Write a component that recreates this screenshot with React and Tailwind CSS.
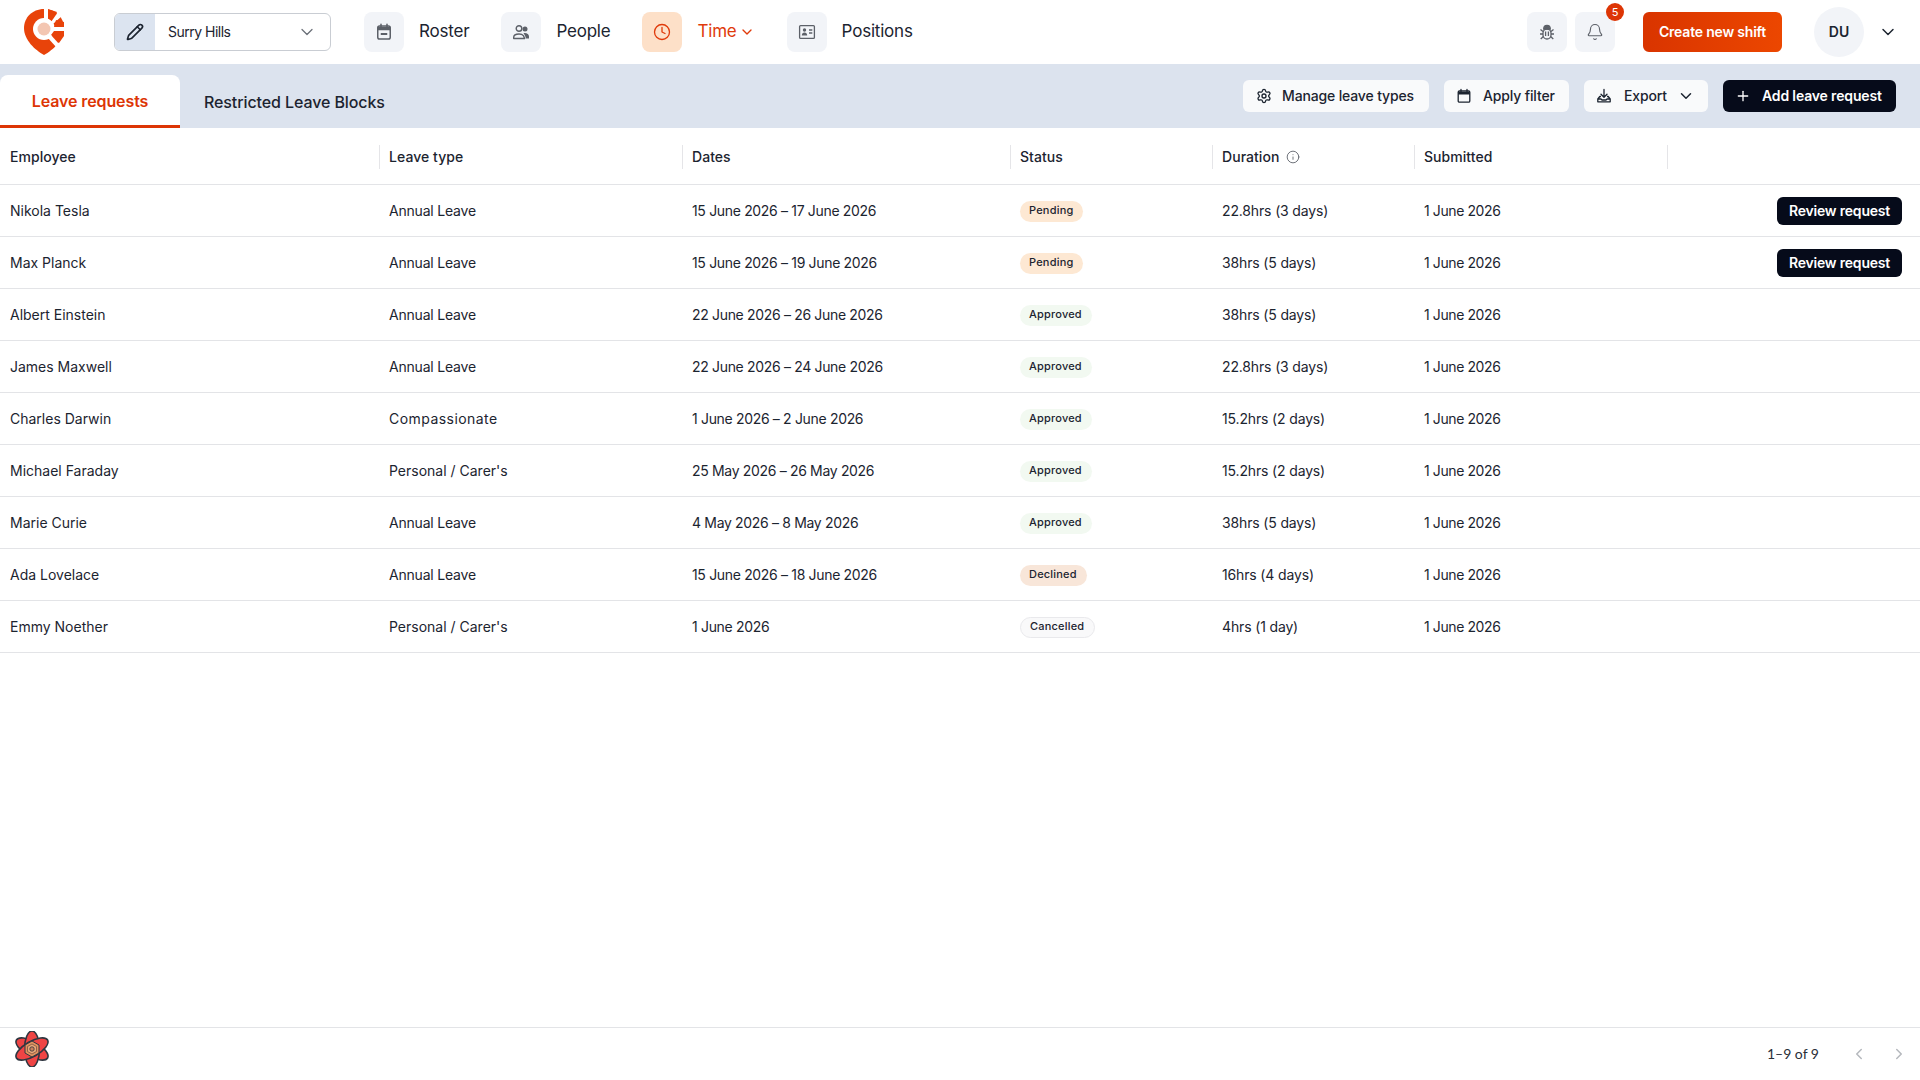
import React from "react";
import {
  Bell,
  ChevronDown,
  ChevronLeft,
  ChevronRight,
  Clock,
  Info,
  Pencil,
  Plus,
  Settings,
} from "lucide-react";

const rows = [
  ["Nikola Tesla", "Annual Leave", "15 June 2026 – 17 June 2026", "Pending", "22.8hrs (3 days)", true],
  ["Max Planck", "Annual Leave", "15 June 2026 – 19 June 2026", "Pending", "38hrs (5 days)", true],
  ["Albert Einstein", "Annual Leave", "22 June 2026 – 26 June 2026", "Approved", "38hrs (5 days)", false],
  ["James Maxwell", "Annual Leave", "22 June 2026 – 24 June 2026", "Approved", "22.8hrs (3 days)", false],
  ["Charles Darwin", "Compassionate", "1 June 2026 – 2 June 2026", "Approved", "15.2hrs (2 days)", false],
  ["Michael Faraday", "Personal / Carer's", "25 May 2026 – 26 May 2026", "Approved", "15.2hrs (2 days)", false],
  ["Marie Curie", "Annual Leave", "4 May 2026 – 8 May 2026", "Approved", "38hrs (5 days)", false],
  ["Ada Lovelace", "Annual Leave", "15 June 2026 – 18 June 2026", "Declined", "16hrs (4 days)", false],
  ["Emmy Noether", "Personal / Carer's", "1 June 2026", "Cancelled", "4hrs (1 day)", false],
];

const badgeStyles = {
  Pending: "bg-[#fde8d3]",
  Approved: "bg-[#f2f9f1]",
  Declined: "bg-[#f8e6d9]",
  Cancelled: "bg-[#f9f9fa] border border-[#e9e9ec]",
};

const leaveTracking = {
  "Annual Leave": "tracking-[-0.2px]",
  Compassionate: "tracking-[0.45px]",
  "Personal / Carer's": "",
};

const gridCols = "grid grid-cols-[379px_303px_328px_202px_202px_253px_1fr]";

function Logo() {
  return (
    <svg width="42" height="48" viewBox="0 0 42 48">
      <path
        d="M21 1 C9 1 1 10 1 20 C1 32 12 42 21 47 C30 42 41 32 41 20 C41 10 33 1 21 1 Z"
        fill="#e8430a"
      />
      <circle cx="21" cy="21" r="11" fill="#fff" />
      <path d="M21 0 L25 0 L25 11 L21 11 Z" fill="#fff" />
      <path d="M25 1 L34 4 L29 13 L25 10 Z" fill="#e8430a" />
      <path d="M35 4 L39 8 L30 16 L28 14 Z" fill="#fff" />
      <path d="M33 12 L41 14 L41 19 L31 19 Z" fill="#e8430a" />
      <path d="M29 19 H42 V23 H29 Z" fill="#fff" />
      <path d="M31 23 H41 V28 L36 35 L28 27 Z" fill="#e8430a" />
      <path d="M27 26 L37 37 L34 40 L24 29 Z" fill="#fff" />
      <circle cx="21" cy="21" r="6.5" fill="#f3c6b2" />
    </svg>
  );
}

function FlowerLogo() {
  return (
    <svg width="40" height="36" viewBox="1 0 38 36">
      {[30, 90, 150].map((a) => (
        <ellipse
          key={a}
          cx="20"
          cy="18"
          rx="18"
          ry="7.5"
          transform={`rotate(${a} 20 18)`}
          fill="#ef4444"
          stroke="#2f3640"
          strokeWidth="1.6"
        />
      ))}
      <polygon points="20,10 27,14 27,22 20,26 13,22 13,14" fill="#e0935f" stroke="#2f3640" strokeWidth="1" />
      <polygon points="20,13 24.5,15.5 24.5,20.5 20,23 15.5,20.5 15.5,15.5" fill="#e9a878" stroke="#7a5240" strokeWidth="0.8" />
      <circle cx="20" cy="18" r="2.2" fill="#c9805a" stroke="#2f3640" strokeWidth="0.8" />
    </svg>
  );
}

function RosterIcon() {
  return (
    <svg width="20" height="20" viewBox="0 0 20 20" fill="none" stroke="currentColor" strokeWidth="1.5">
      <rect x="3.75" y="4" width="12.5" height="13" rx="1.8" />
      <path d="M3.75 6.5h12.5" strokeWidth="3.5" />
      <path d="M7 2.2v2.5M13 2.2v2.5" strokeLinecap="round" />
      <path d="M6.75 12h6.5" strokeWidth="2" />
    </svg>
  );
}

function PeopleIcon() {
  return (
    <svg width="20" height="20" viewBox="0 0 20 20" fill="none" stroke="currentColor" strokeWidth="1.4">
      <circle cx="8" cy="6.5" r="2.8" />
      <path d="M2.7 16.5v-1.2c0-2 2.3-3.3 5.3-3.3 2.2 0 3.6.6 4.4 1.6l1.2 2.9Z" strokeLinejoin="round" />
      <circle cx="14" cy="7" r="2.5" fill="currentColor" stroke="none" />
      <path d="M12.5 11.2c3-.5 5.5.8 5.5 3.2v2.1h-3.2c-.2-2-1-3.9-2.3-5.3Z" fill="currentColor" stroke="none" />
    </svg>
  );
}

function PositionIcon() {
  return (
    <svg width="20" height="20" viewBox="0 0 20 20" fill="none" stroke="currentColor" strokeWidth="1.3">
      <rect x="2.6" y="3.6" width="14.8" height="12.8" rx="1" />
      <circle cx="7.5" cy="8" r="1.7" fill="currentColor" stroke="none" />
      <path d="M4.8 13.5c0-2 1.2-3 2.7-3s2.7 1 2.7 3Z" fill="currentColor" stroke="none" />
      <path d="M12 8h3.3M12 11h3.3" />
    </svg>
  );
}

function BugIcon() {
  return (
    <svg width="20" height="20" viewBox="0 0 20 20" fill="none" stroke="currentColor" strokeWidth="1.3">
      <path d="M6.7 7c0-2 1.4-3.6 3.3-3.6S13.3 5 13.3 7Z" fill="currentColor" />
      <rect x="6" y="7" width="8" height="10" rx="4" />
      <path d="M8.6 9.5v4.5M11.4 9.5v4.5M6 9.5 3.5 7.5M14 9.5l2.5-2M6 12H3M14 12h3M6.4 14.6 3.7 17M13.6 14.6l2.7 2.4" />
    </svg>
  );
}

function CalendarIcon() {
  return (
    <svg width="16" height="16" viewBox="0 0 16 16" fill="none" stroke="currentColor" strokeWidth="1.3">
      <rect x="2.2" y="3" width="11.6" height="11.2" rx="1.2" />
      <path d="M2.2 5.2h11.6" strokeWidth="2.6" />
      <path d="M5 1.4v2M11 1.4v2" strokeLinecap="round" />
    </svg>
  );
}

function ExportIcon() {
  return (
    <svg width="16" height="16" viewBox="0 0 16 16" fill="none" stroke="currentColor" strokeWidth="1.3">
      <path d="M8 1.5v7.5M5 6.3 8 9.3l3-3" strokeLinecap="round" strokeLinejoin="round" />
      <path d="M5 8.5H3.8L1.8 11v2.8h12.4V11l-2-2.5H11M1.8 11h3.2l1 1h4l1-1h3.2" strokeLinejoin="round" />
    </svg>
  );
}

function NavItem({ icon: Icon, label, active }) {
  return (
    <div className="flex items-center gap-4">
      <div
        className={`w-10 h-10 rounded-lg flex items-center justify-center ${
          active ? "bg-[#fde0c8] text-[#e03a0a]" : "bg-[#f2f4f8] text-[#5c6068]"
        }`}
      >
        <Icon />
      </div>
      <span className={`text-[17px] -ml-px -mt-[1px] tracking-[-0.2px] ${active ? "text-[#e03a0a]" : "text-[#1c2430]"}`}>{label}</span>
      {active && <ChevronDown size={16} className="text-[#e03a0a] -ml-[14px]" />}
    </div>
  );
}

function ToolButton({ children, className }) {
  return (
    <button
      className={`h-8 rounded-md flex items-center text-sm font-medium tracking-[-0.15px] text-[#1c2430] bg-[#f9fafb] ${className}`}
    >
      {children}
    </button>
  );
}

export default function App() {
  return (
    <div className="h-screen flex flex-col bg-white font-['Inter',sans-serif] text-[#1c2430]">
      <header className="h-16 flex items-center shrink-0">
        <div className="ml-[23px] w-[91px] flex">
          <Logo />
        </div>
        <div className="w-[217px] h-[38px] flex items-center rounded-md border border-[#c9cdd3] overflow-hidden">
          <div className="w-10 h-full bg-[#dce4f0] flex items-center justify-center">
            <Pencil size={18} strokeWidth={2.2} className="text-[#1c2430]" />
          </div>
          <span className="ml-[13px] text-sm tracking-[-0.5px] flex-1">Surry Hills</span>
          <ChevronDown size={20} strokeWidth={1.5} className="text-[#6b7078] mr-[13px]" />
        </div>
        <nav className="ml-[33px] flex items-center gap-8">
          <NavItem icon={RosterIcon} label="Roster" />
          <NavItem icon={PeopleIcon} label="People" />
          <NavItem icon={() => <Clock size={18} strokeWidth={1.75} />} label="Time" active />
          <NavItem icon={PositionIcon} label="Positions" />
        </nav>
        <div className="ml-auto flex items-center">
          <div className="w-10 h-10 rounded-lg bg-[#f2f4f8] flex items-center justify-center text-[#5c6068]">
            <BugIcon />
          </div>
          <div className="relative ml-2 w-10 h-10 rounded-lg bg-[#f2f4f8] flex items-center justify-center text-[#5c6068]">
            <Bell size={18} strokeWidth={1.5} />
            <span className="absolute -top-[9px] -right-[9px] w-[18px] h-[18px] rounded-full bg-[#dd3505] text-white text-[11px] flex items-center justify-center">
              5
            </span>
          </div>
          <button className="ml-7 w-[139px] h-10 rounded-md bg-gradient-to-r from-[#d93400] to-[#ec4700] text-white text-sm font-semibold tracking-[-0.2px]">
            Create new shift
          </button>
          <div className="ml-8 w-[50px] h-[50px] rounded-full bg-[#f2f4f8] flex items-center justify-center text-sm font-semibold">
            DU
          </div>
          <ChevronDown size={20} strokeWidth={1.75} className="ml-[14px] mr-[22px]" />
        </div>
      </header>

      <div className="h-16 bg-[#dce3ee] flex items-end justify-between shrink-0">
        <div className="flex items-end">
          <div className="h-[53px] w-[180px] pt-px bg-white rounded-t-lg border-b-[3px] border-[#dd3505] flex items-center justify-center text-[#dd3505] text-base font-semibold tracking-[-0.1px]">
            Leave requests
          </div>
          <div className="h-[53px] ml-6 flex items-center text-base font-medium tracking-[-0.1px]">Restricted Leave Blocks</div>
        </div>
        <div className="self-center flex items-center gap-[15px] pr-6">
          <ToolButton className="w-[186px] pl-[13px] gap-[10px]">
            <Settings size={16} />
            Manage leave types
          </ToolButton>
          <ToolButton className="w-[125px] pl-3 gap-[11px]">
            <CalendarIcon />
            Apply filter
          </ToolButton>
          <ToolButton className="w-[124px] pl-3 gap-3">
            <ExportIcon />
            Export
            <ChevronDown size={18} className="-ml-[2px]" />
          </ToolButton>
          <button className="w-[173px] h-8 rounded-md bg-[#060b1a] text-white text-sm font-semibold tracking-[-0.15px] flex items-center pl-3 gap-[11px]">
            <Plus size={16} />
            Add leave request
          </button>
        </div>
      </div>

      <main className="flex-1">
        <div className={`${gridCols} h-[57px] pt-[1px] items-center border-b border-[#e3e4e7] text-sm font-medium tracking-[0.05px]`}>
          {["Employee", "Leave type", "Dates", "Status", "Duration", "Submitted", ""].map((h, i) => (
            <div
              key={i}
              className={`flex items-center gap-[7px] h-6 ${i > 0 ? "border-l border-[#e5e5e8] pl-[9px]" : "pl-[10px]"}`}
            >
              {h}
              {h === "Duration" && <Info size={14} strokeWidth={1.5} className="text-[#5c6068]" />}
            </div>
          ))}
        </div>
        {rows.map((r) => (
          <div key={r[0]} className={`${gridCols} h-[52px] items-center border-b border-[#e3e4e7] text-sm`}>
            <div className="pl-[10px]">{r[0]}</div>
            <div className={`pl-[10px] ${leaveTracking[r[1]]}`}>{r[1]}</div>
            <div className="pl-[10px] tracking-[-0.33px]">{r[2]}</div>
            <div className="pl-[10px]">
              <span
                className={`inline-flex items-center h-[21px] pl-[9px] pr-[10px] rounded-full text-[11px] font-medium tracking-[0.2px] ${badgeStyles[r[3]]}`}
              >
                {r[3]}
              </span>
            </div>
            <div className="pl-[10px] tracking-[-0.15px]">{r[4]}</div>
            <div className="pl-[10px] tracking-[-0.4px]">1 June 2026</div>
            <div className="flex justify-end pr-[18px]">
              {r[5] && (
                <button className="w-[125px] h-[28px] rounded-md bg-[#060b1a] text-white text-sm font-semibold tracking-[-0.2px]">
                  Review request
                </button>
              )}
            </div>
          </div>
        ))}
      </main>

      <footer className="h-[53px] border-t border-[#e3e4e7] flex items-center shrink-0">
        <div className="ml-3 -mt-[10px] flex">
          <FlowerLogo />
        </div>
        <span className="ml-auto font-['Lato',sans-serif] text-sm text-[#2a2f38]">1–9 of 9</span>
        <ChevronLeft size={18} className="ml-[31px] text-[#b5b8bd]" />
        <ChevronRight size={18} className="ml-[22px] mr-3 text-[#b5b8bd]" />
      </footer>
    </div>
  );
}
